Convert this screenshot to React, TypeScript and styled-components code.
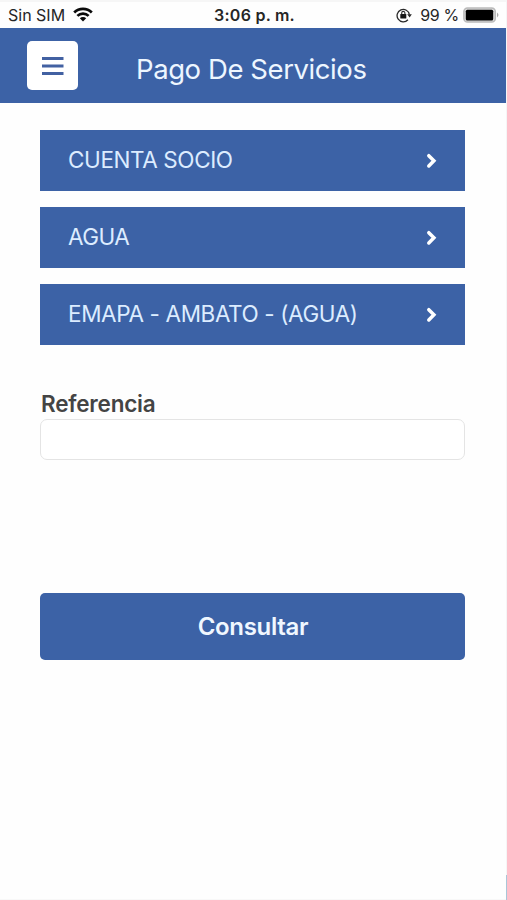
import React from "react";
import styled, { createGlobalStyle } from "styled-components";

const blue = "#3c62a6";

const GlobalStyle = createGlobalStyle`
  * { box-sizing: border-box; }
  body { margin: 0; background: #fefefe; font-family: Inter, "Liberation Sans", sans-serif; }
  button, input { font: inherit; }
`;

const Screen = styled.div`
  display: flex;
  height: 900px;
  overflow: hidden;
`;

const Page = styled.div`
  flex: 1;
  min-width: 0;
  border-top: 2px solid #f6f6f6;
  border-bottom: 1px solid #f8f8f8;
`;

const Edge = styled.div`
  width: 1px;
  display: flex;
  flex-direction: column;
  justify-content: flex-end;
  background: #f5f5f6;
`;

const EdgeMark = styled.div`
  height: 25px;
  background: #a9c6d8;
`;

const StatusBar = styled.div`
  display: grid;
  grid-template-columns: 1fr auto 1fr;
  align-items: center;
  height: 26px;
  padding: 0 8px;
  color: #262626;
  line-height: 20px;
`;

const StatusGroup = styled.div<{ $end?: boolean }>`
  display: flex;
  align-items: center;
  justify-content: ${(p) => (p.$end ? "flex-end" : "flex-start")};
`;

const StatusText = styled.span<{ $spacing?: number }>`
  font-size: 16px;
  letter-spacing: ${(p) => p.$spacing ?? 0}px;
  white-space: nowrap;
`;

const Clock = styled.span`
  font-size: 16px;
  font-weight: 600;
  letter-spacing: 0.25px;
  white-space: nowrap;
  margin-right: -3px;
`;

const WifiSvg = styled.svg`
  margin-left: 8px;
  margin-top: -2px;
`;

const LockSvg = styled.svg`
  margin-right: 8px;
  margin-top: -1px;
`;

const BatterySvg = styled.svg`
  margin-left: 4px;
  margin-right: -2px;
`;

const Header = styled.header`
  display: flex;
  align-items: center;
  height: 75px;
  padding-left: 27px;
  background: ${blue};
`;

const MenuButton = styled.button`
  display: grid;
  place-items: center;
  width: 51px;
  height: 49px;
  padding: 0;
  border: 0;
  border-radius: 5px;
  background: #fff;
`;

const Title = styled.h1`
  margin: 7px 0 0 58px;
  color: #edf6ff;
  font-size: 27.5px;
  font-weight: 400;
  line-height: 36px;
  letter-spacing: -0.42px;
  white-space: nowrap;
`;

const Content = styled.main`
  padding: 27px 41px 0 40px;
`;

const Options = styled.div`
  display: flex;
  flex-direction: column;
  gap: 16px;
`;

const Option = styled.button`
  display: flex;
  align-items: center;
  justify-content: space-between;
  height: 61px;
  padding: 0 28px;
  border: 0;
  background: ${blue};
  color: #dcecff;
`;

const OptionLabel = styled.span<{ $spacing: number }>`
  margin-bottom: 2px;
  font-size: 22.5px;
  line-height: 30px;
  letter-spacing: ${(p) => p.$spacing}px;
  white-space: nowrap;
`;

const Label = styled.label`
  display: block;
  margin-top: 44px;
  padding-left: 1px;
  color: #444;
  font-size: 22.5px;
  font-weight: 600;
  line-height: 30px;
  letter-spacing: -0.22px;
`;

const Field = styled.input`
  display: block;
  width: 100%;
  height: 41px;
  padding: 0 12px;
  border: 1.5px solid #e4e4e4;
  border-radius: 7px;
  background: #fff;
  outline: 0;
`;

const Submit = styled.button`
  display: block;
  width: 100%;
  height: 67px;
  margin-top: 133px;
  padding: 0 0 0 1px;
  border: 0;
  border-radius: 5px;
  background: ${blue};
  color: #f0f7ff;
  font-size: 24px;
  font-weight: 600;
  letter-spacing: -0.3px;
`;

const Wifi = () => (
  <WifiSvg width="20" height="15" viewBox="0 0 20 15" fill="none" stroke="#0b0b0b" strokeWidth="2.7">
    <path d="M1.2 5.5a12.5 12.5 0 0 1 17.6 0" />
    <path d="M4.4 8.9a8 8 0 0 1 11.2 0" />
    <path d="M10 14.4 6.8 11.3a4.5 4.5 0 0 1 6.4 0Z" fill="#0b0b0b" stroke="none" />
  </WifiSvg>
);

const RotationLock = () => (
  <LockSvg width="16" height="16" viewBox="0 0 16 16" fill="none" stroke="#292929" strokeWidth="1.3">
    <path d="M11.9 12.8A6.2 6.2 0 1 1 13.4 7.6" />
    <path d="m11.2 7.2 4.6 0-2.2 3.3Z" fill="#292929" stroke="none" />
    <rect x="4.3" y="7" width="6" height="4.4" rx=".5" fill="#151515" stroke="none" />
    <path d="M5.7 7.4V6a1.6 1.6 0 0 1 3.2 0v1.4" strokeWidth="1.1" />
  </LockSvg>
);

const Battery = () => (
  <BatterySvg width="37" height="16" viewBox="0 0 37 16">
    <rect x=".9" y=".9" width="31.4" height="14.2" rx="3.6" fill="#d9d9d9" stroke="#bababa" strokeWidth="1.5" />
    <rect x="2.8" y="2.8" width="27.4" height="10.6" rx="1.5" fill="#000" />
    <path d="M34 5.6q3 2.4 0 4.8Z" fill="#aaa" />
  </BatterySvg>
);

const MenuIcon = () => (
  <svg width="22" height="20" viewBox="0 0 22 20" stroke="#4261a2" strokeWidth="3">
    <path d="M0 2.5h21.5M0 10h21.5M0 17.5h21.5" />
  </svg>
);

const Chevron = () => (
  <svg width="11" height="16" viewBox="0 0 11 16" fill="none" stroke="#fff" strokeWidth="3.5" strokeLinecap="round">
    <path d="m2.8 2.7 5.1 5.1-5.1 5.1" />
  </svg>
);

const options = [
  { name: "CUENTA SOCIO", spacing: -0.4 },
  { name: "AGUA", spacing: -0.5 },
  { name: "EMAPA - AMBATO - (AGUA)", spacing: -0.39 },
];

export default function App() {
  return (
    <Screen>
      <GlobalStyle />
      <Page>
        <StatusBar>
          <StatusGroup>
            <StatusText $spacing={0}>Sin SIM</StatusText>
            <Wifi />
          </StatusGroup>
          <Clock>3:06 p. m.</Clock>
          <StatusGroup $end>
            <RotationLock />
            <StatusText $spacing={-0.3}>99 %</StatusText>
            <Battery />
          </StatusGroup>
        </StatusBar>
        <Header>
          <MenuButton aria-label="Menú">
            <MenuIcon />
          </MenuButton>
          <Title>Pago De Servicios</Title>
        </Header>
        <Content>
          <Options>
            {options.map((o) => (
              <Option key={o.name}>
                <OptionLabel $spacing={o.spacing}>{o.name}</OptionLabel>
                <Chevron />
              </Option>
            ))}
          </Options>
          <Label htmlFor="referencia">Referencia</Label>
          <Field id="referencia" />
          <Submit>Consultar</Submit>
        </Content>
      </Page>
      <Edge>
        <EdgeMark />
      </Edge>
    </Screen>
  );
}
